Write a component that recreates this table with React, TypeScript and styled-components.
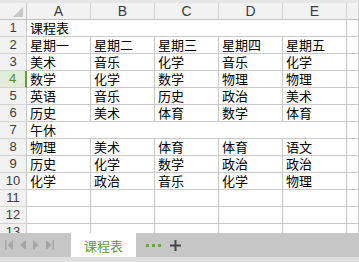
import React from "react";
import styled, { createGlobalStyle } from "styled-components";

const GlobalStyle = createGlobalStyle`
  html, body {
    margin: 0;
    padding: 0;
    background: #ffffff;
    font-family: "Liberation Sans", "Noto Sans CJK SC", sans-serif;
  }
`;

const Window = styled.div`
  width: 359px;
  height: 262px;
  display: flex;
  flex-direction: column;
  overflow: hidden;
`;

const TopStrip = styled.div`
  height: 3px;
  background: #e6e6e6;
  flex: none;
`;

const SheetArea = styled.div`
  flex: 1;
  overflow: hidden;
`;

const Grid = styled.div`
  display: grid;
  grid-template-columns: 27px repeat(5, 64px) 1fr;
  grid-auto-rows: 17px;
`;

const Corner = styled.div`
  position: relative;
  box-sizing: border-box;
  background: #f2f2f2;
  border-right: 1px solid #c8c8c8;
  border-bottom: 1px solid #c0c0c0;
  &::after {
    content: "";
    position: absolute;
    right: 3px;
    bottom: 2px;
    border-style: solid;
    border-width: 0 0 10px 10px;
    border-color: transparent transparent #c8c8c8 transparent;
  }
`;

const ColHead = styled.div`
  box-sizing: border-box;
  background: #f2f2f2;
  border-right: 1px solid #d4d4d4;
  border-bottom: 1px solid #c0c0c0;
  color: #3c3c3c;
  font-size: 14px;
  line-height: 16px;
  text-align: center;
`;

const RowHead = styled.div<{ $active?: boolean }>`
  box-sizing: border-box;
  background: ${(p) => (p.$active ? "#e1ecd8" : "#f2f2f2")};
  border-right: ${(p) => (p.$active ? "2px solid #5fa33a" : "1px solid #c8c8c8")};
  border-bottom: 1px solid #d4d4d4;
  color: ${(p) => (p.$active ? "#4e8f2b" : "#3c3c3c")};
  font-size: 13px;
  line-height: 16px;
  text-align: center;
`;

const Cell = styled.div<{ $span?: number }>`
  box-sizing: border-box;
  grid-column: ${(p) => (p.$span ? `span ${p.$span}` : "auto")};
  border-right: 1px solid #c8c8c8;
  border-bottom: 1px solid #c8c8c8;
  padding-left: 3px;
  color: #000000;
  font-family: "Noto Sans CJK SC", sans-serif;
  font-size: 13px;
  line-height: 16px;
  white-space: nowrap;
`;

const TabBar = styled.div`
  height: 24px;
  flex: none;
  background: #c6c6c6;
  display: flex;
  align-items: stretch;
`;

const NavGroup = styled.div`
  width: 71px;
  display: flex;
  align-items: center;
  padding-left: 5px;
  gap: 7px;
  box-sizing: border-box;
`;

const Tab = styled.div`
  width: 65px;
  background: #ffffff;
  display: flex;
  align-items: center;
  justify-content: center;
  color: #5d9e2e;
  font-family: "Noto Sans CJK SC", sans-serif;
  font-size: 13px;
`;

const More = styled.div`
  display: flex;
  align-items: center;
  gap: 3px;
  margin-left: 10px;
`;

const Dot = styled.span`
  width: 3px;
  height: 3px;
  background: #5ab030;
`;

const Plus = styled.div`
  display: flex;
  align-items: center;
  margin-left: 9px;
`;

const BottomStrip = styled.div`
  height: 5px;
  flex: none;
  background: #dedede;
`;

const NavIcon = ({ dir, bar }: { dir: "l" | "r"; bar?: boolean }) => (
  <svg width={bar ? 8 : 6} height="10" viewBox={bar ? "0 0 8 10" : "0 0 6 10"}>
    {dir === "l" ? (
      <>
        {bar && <rect x="0" y="0" width="1.5" height="10" fill="#a6a6a6" />}
        <polygon points={bar ? "8,0 8,10 2.5,5" : "6,0 6,10 0,5"} fill="#a6a6a6" />
      </>
    ) : (
      <>
        <polygon points="0,0 0,10 5.5,5" fill="#a6a6a6" />
        {bar && <rect x="6.5" y="0" width="1.5" height="10" fill="#a6a6a6" />}
      </>
    )}
  </svg>
);

const cols = ["A", "B", "C", "D", "E", ""];

type Row = { merged?: string; cells?: string[] };

const rows: Row[] = [
  { merged: "课程表" },
  { cells: ["星期一", "星期二", "星期三", "星期四", "星期五"] },
  { cells: ["美术", "音乐", "化学", "音乐", "化学"] },
  { cells: ["数学", "化学", "数学", "物理", "物理"] },
  { cells: ["英语", "音乐", "历史", "政治", "美术"] },
  { cells: ["历史", "美术", "体育", "数学", "体育"] },
  { merged: "午休" },
  { cells: ["物理", "美术", "体育", "体育", "语文"] },
  { cells: ["历史", "化学", "数学", "政治", "政治"] },
  { cells: ["化学", "政治", "音乐", "化学", "物理"] },
  { cells: ["", "", "", "", ""] },
  { cells: ["", "", "", "", ""] },
  { cells: ["", "", "", "", ""] },
];

export default function App() {
  return (
    <Window>
      <GlobalStyle />
      <TopStrip />
      <SheetArea>
        <Grid>
          <Corner />
          {cols.map((c, i) => (
            <ColHead key={i}>{c}</ColHead>
          ))}
          {rows.map((r, i) => (
            <React.Fragment key={i}>
              <RowHead $active={i === 3}>{i + 1}</RowHead>
              {r.merged ? (
                <Cell $span={5}>{r.merged}</Cell>
              ) : (
                r.cells!.map((t, j) => <Cell key={j}>{t}</Cell>)
              )}
              <Cell />
            </React.Fragment>
          ))}
        </Grid>
      </SheetArea>
      <TabBar>
        <NavGroup>
          <NavIcon dir="l" bar />
          <NavIcon dir="l" />
          <NavIcon dir="r" />
          <NavIcon dir="r" bar />
        </NavGroup>
        <Tab>课程表</Tab>
        <More>
          <Dot />
          <Dot />
          <Dot />
        </More>
        <Plus>
          <svg width="11" height="11" viewBox="0 0 11 11">
            <rect x="0" y="4.5" width="11" height="2" fill="#444444" />
            <rect x="4.5" y="0" width="2" height="11" fill="#444444" />
          </svg>
        </Plus>
      </TabBar>
      <BottomStrip />
    </Window>
  );
}
